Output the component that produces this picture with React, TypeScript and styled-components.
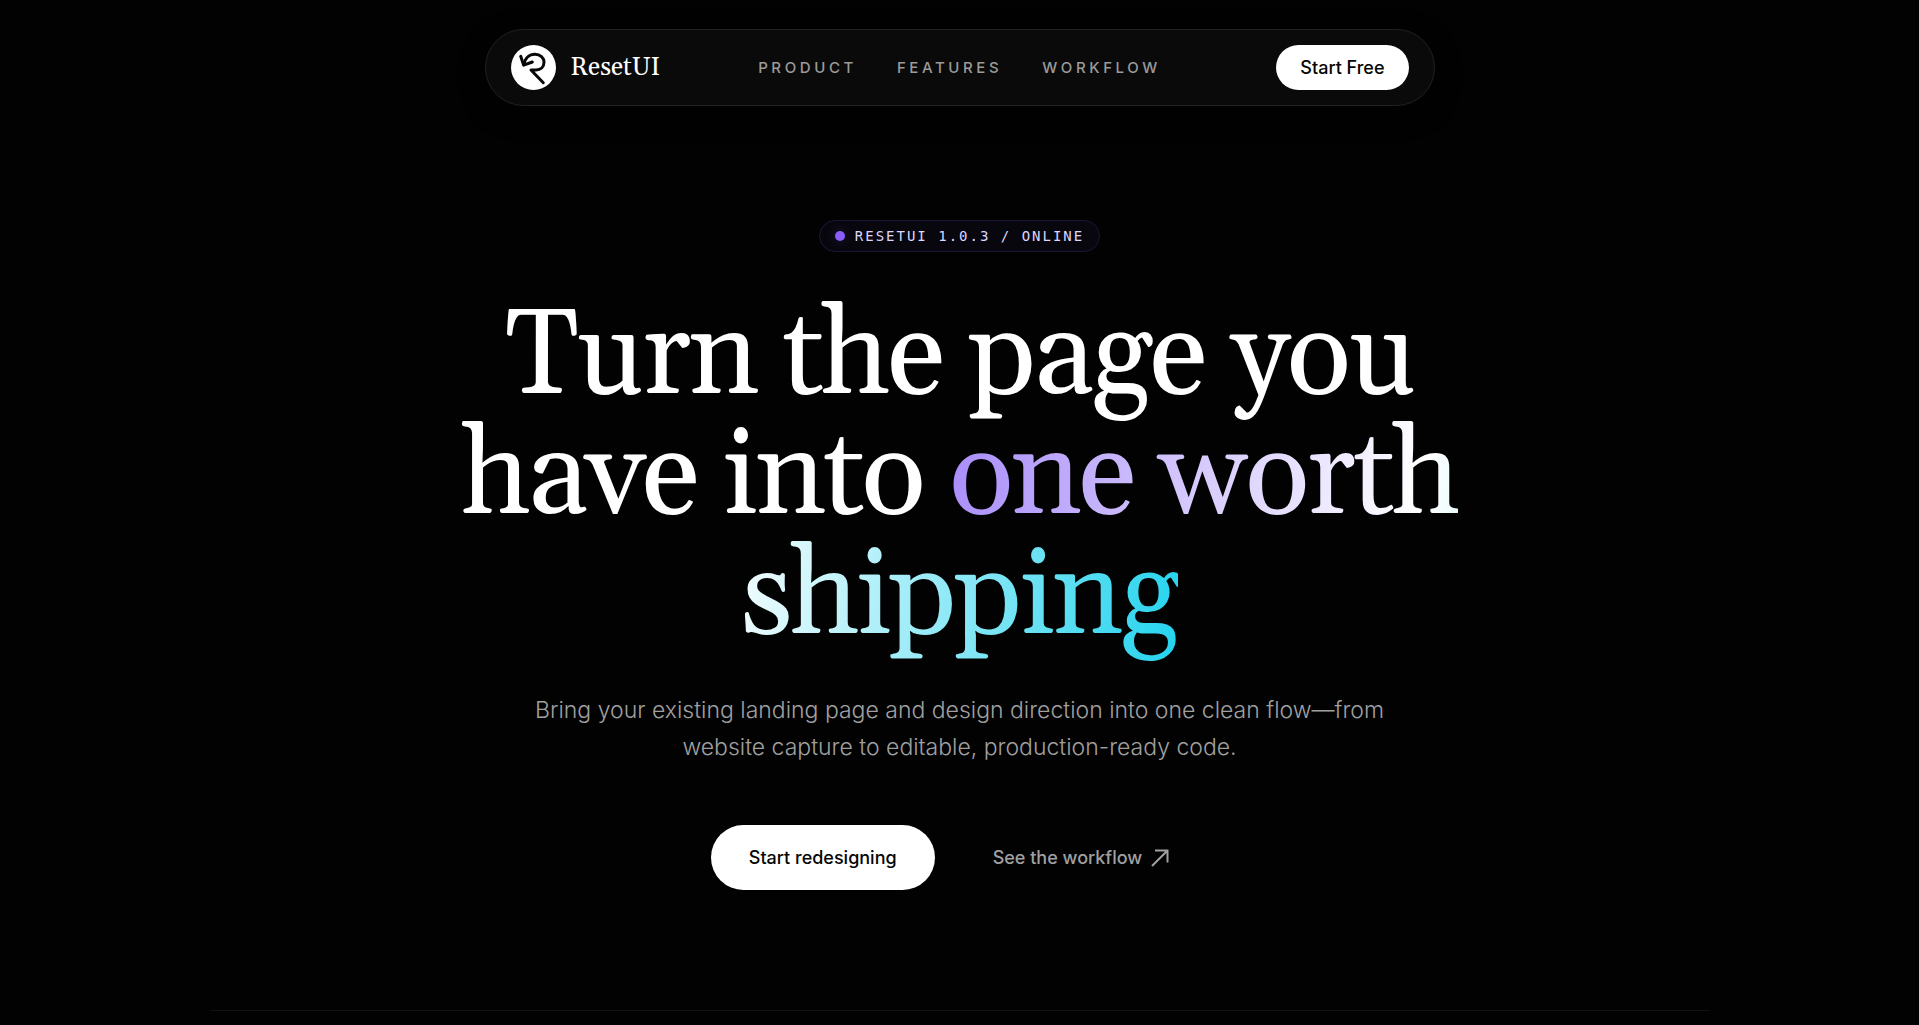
import React from 'react';
import styled, { createGlobalStyle } from 'styled-components';

const serif = `Georgia, Gelasio, "Liberation Serif", "Times New Roman", serif`;
const sans = `Inter, "Liberation Sans", Arial, sans-serif`;
const mono = `"DejaVu Sans Mono", "Liberation Mono", monospace`;

const GlobalStyle = createGlobalStyle`
  *, *::before, *::after { box-sizing: border-box; }
  body {
    margin: 0;
    background: #020202;
    color: #ffffff;
    font-family: ${sans};
  }
`;

const Page = styled.div`
  min-height: 100vh;
  padding: 29px 24px 0;
  overflow: hidden;
`;

const Header = styled.header`
  display: grid;
  grid-template-columns: 1fr auto 1fr;
  align-items: center;
  max-width: 950px;
  margin: 0 auto;
  padding: 15px 25px;
  border: 1px solid #222222;
  border-radius: 40px;
  background: #0a0a0a;
  box-shadow: 0 8px 24px rgba(0, 0, 0, 0.5);
`;

const Brand = styled.a`
  display: flex;
  align-items: center;
  gap: 15px;
  color: #ffffff;
  font: 400 25px/32px ${serif};
  text-decoration: none;
`;

const Nav = styled.nav`
  display: flex;
  gap: 40px;
`;

const NavLink = styled.a`
  color: #9b9b9b;
  font-size: 15px;
  font-weight: 500;
  line-height: 20px;
  letter-spacing: 0.24em;
  text-transform: uppercase;
  text-decoration: none;
`;

const Button = styled.button<{ $large?: boolean }>`
  height: ${(p) => (p.$large ? 65 : 45)}px;
  padding: 0 ${(p) => (p.$large ? 38 : 24)}px;
  border: 0;
  border-radius: 40px;
  background: #ffffff;
  color: #050505;
  font: 500 18px/24px ${sans};
  cursor: pointer;
`;

const HeaderButton = styled(Button)`
  justify-self: end;
`;

const Hero = styled.main`
  display: flex;
  flex-direction: column;
  align-items: center;
  max-width: 1500px;
  margin: 0 auto;
  padding: 114px 0 120px;
  border-bottom: 1px solid #121212;
  text-align: center;
`;

const Status = styled.p`
  display: flex;
  align-items: center;
  gap: 10px;
  height: 32px;
  margin: 0 0 46px;
  padding: 0 15px;
  border: 1px solid #1d1733;
  border-radius: 16px;
  background: #08070e;
  color: #ddd6fe;
  font: 400 14px/20px ${mono};
  letter-spacing: 2px;
`;

const Dot = styled.span`
  width: 10px;
  height: 10px;
  border-radius: 50%;
  background: #8b5cf6;
  box-shadow: 0 0 12px rgba(139, 92, 246, 0.25);
`;

const Title = styled.h1`
  max-width: 1040px;
  margin: 0 0 34px;
  font: 400 120px/120px ${serif};
  letter-spacing: -0.025em;
`;

const Accent = styled.span`
  background: linear-gradient(100deg, #a78bfa, #ffffff 50%, #22d3ee);
  background-clip: text;
  -webkit-background-clip: text;
  color: transparent;
`;

const Lead = styled.p`
  max-width: 860px;
  margin: 0 0 59px;
  color: #a0a0a0;
  font-size: 23px;
  font-weight: 300;
  line-height: 37px;
`;

const Actions = styled.div`
  display: flex;
  align-items: center;
  gap: 20px;
`;

const TextLink = styled.a`
  display: flex;
  align-items: center;
  gap: 8px;
  padding: 20px 38px;
  color: #a0a0a0;
  font-size: 18px;
  font-weight: 500;
  line-height: 24px;
  text-decoration: none;
`;

const LogoMark = () => (
  <svg width="45" height="45" viewBox="0 0 45 45" aria-hidden="true">
    <circle cx="22.5" cy="22.5" r="22.5" fill="#ffffff" />
    <g fill="none" stroke="#080808" strokeWidth="3" strokeLinecap="round" strokeLinejoin="round">
      <path d="M13 19.500C14 13 18.500 9.300 24 9.300C29.300 9.300 33 12.800 33 17.300C33 22 29.500 25 25 25H20L32.300 37.700" />
      <path d="M9.700 11.300L12.700 20.200L21.300 17" />
    </g>
  </svg>
);

const ArrowIcon = () => (
  <svg width="20" height="20" viewBox="0 0 20 20" fill="none" stroke="currentColor" strokeWidth="2" aria-hidden="true">
    <path d="M2 18L17.500 2.500M5 2.500H17.500V14.500" />
  </svg>
);

const links = ['Product', 'Features', 'Workflow'];

export default function App() {
  return (
    <>
      <GlobalStyle />
      <Page>
        <Header>
          <Brand href="#top">
            <LogoMark />
            ResetUI
          </Brand>
          <Nav aria-label="Main">
            {links.map((label) => (
              <NavLink key={label} href={`#${label.toLowerCase()}`}>
                {label}
              </NavLink>
            ))}
          </Nav>
          <HeaderButton type="button">Start Free</HeaderButton>
        </Header>
        <Hero id="top">
          <Status>
            <Dot />
            RESETUI 1.0.3 / ONLINE
          </Status>
          <Title>
            Turn the page you have into <Accent>one worth shipping</Accent>
          </Title>
          <Lead>
            Bring your existing landing page and design direction into one clean flow—from website capture to
            editable, production-ready code.
          </Lead>
          <Actions>
            <Button type="button" $large>
              Start redesigning
            </Button>
            <TextLink href="#workflow">
              See the workflow
              <ArrowIcon />
            </TextLink>
          </Actions>
        </Hero>
      </Page>
    </>
  );
}
